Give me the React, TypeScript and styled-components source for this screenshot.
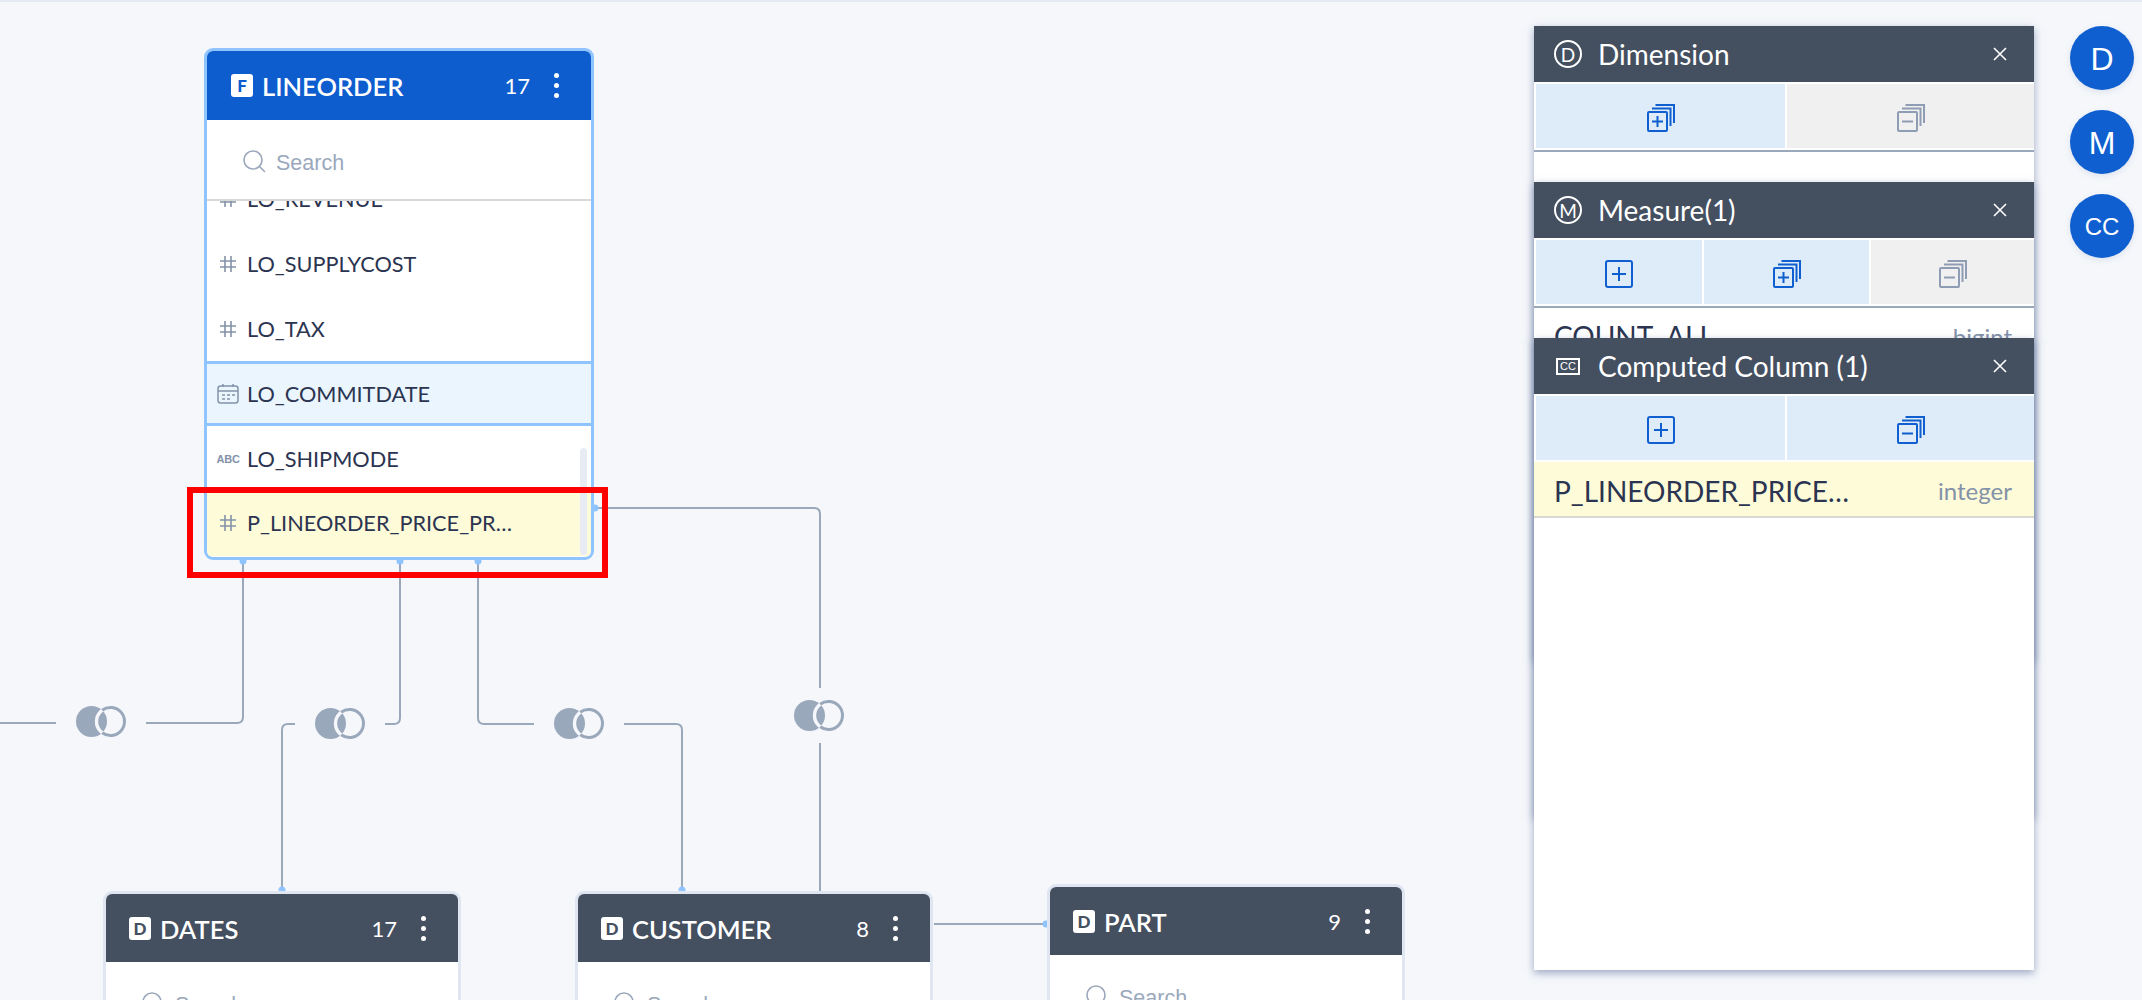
import React from "react";
import styled, { createGlobalStyle } from "styled-components";

const Global = createGlobalStyle`
  html, body { margin: 0; padding: 0; background: #f5f7fb; }
  * { box-sizing: border-box; }
`;

const Page = styled.div`
  position: relative;
  width: 2142px;
  height: 1000px;
  overflow: hidden;
  background: #f5f7fb;
  border-top: 2px solid #e4e9f4;
  font-family: Lato, "Liberation Sans", sans-serif;
`;

const Links = styled.svg`
  position: absolute;
  left: 0;
  top: -2px;
  width: 2142px;
  height: 1000px;
`;

const TableNode = styled.div<{ $x: number; $y: number; $w: number; $h: number; $active?: boolean }>`
  position: absolute;
  left: ${(p) => p.$x}px;
  top: ${(p) => p.$y - 2}px;
  width: ${(p) => p.$w}px;
  height: ${(p) => p.$h}px;
  border: 3px solid ${(p) => (p.$active ? "#90c4ff" : "#dfe6f2")};
  border-radius: 9px;
  background: #fff;
  display: flex;
  flex-direction: column;
  overflow: hidden;
`;

const TableHead = styled.div<{ $active?: boolean }>`
  flex: none;
  height: ${(p) => (p.$active ? 69 : 68)}px;
  display: flex;
  align-items: center;
  padding-left: ${(p) => (p.$active ? 24 : 23)}px;
  padding-right: 32px;
  color: #fff;
  background: ${(p) => (p.$active ? "#0e5dcf" : "#444f60")};
`;

const TypeBadge = styled.span<{ $active?: boolean }>`
  flex: none;
  width: 22px;
  height: 23px;
  margin-right: 9px;
  border-radius: 3px;
  background: #fff;
  color: ${(p) => (p.$active ? "#0e5dcf" : "#444f60")};
  font: 900 17px/23px Lato, "Liberation Sans", sans-serif;
  text-align: center;
`;

const TableName = styled.span`
  flex: 1;
  padding-top: 1px;
  font-size: 25.5px;
  font-weight: 600;
  line-height: 30px;
`;

const ColCount = styled.span`
  padding-top: 1px;
  font-size: 22px;
  line-height: 30px;
  margin-right: 24px;
`;

const Kebab = styled.span`
  flex: none;
  display: flex;
  flex-direction: column;
  gap: 5px;
  i {
    display: block;
    width: 5px;
    height: 5px;
    border-radius: 50%;
    background: #fff;
  }
`;

const SearchBar = styled.div`
  flex: none;
  height: 81px;
  display: flex;
  align-items: center;
  gap: 10px;
  padding-left: 36px;
  padding-top: 3px;
  border-bottom: 2px solid #d8d8d8;
  color: #9aa8bc;
  font: 21.5px/26px "Liberation Sans", sans-serif;
`;

const SearchHint = styled.span`
  padding-top: 3px;
`;

const ColList = styled.div`
  position: relative;
  flex: 1;
  overflow: hidden;
  min-height: 0;
`;

const ColRows = styled.div`
  margin-top: -35px;
`;

const ColRow = styled.div<{ $kind?: "date" | "cc" }>`
  height: 65px;
  display: flex;
  align-items: center;
  padding-left: 10px;
  gap: 8px;
  color: #2b3450;
  font-size: 21.7px;
  background: ${(p) => (p.$kind === "date" ? "#eaf5fd" : p.$kind === "cc" ? "#fdfbd8" : "#fff")};
  ${(p) => (p.$kind === "date" ? "border-top: 3px solid #90c4ff; border-bottom: 3px solid #90c4ff;" : "")}
  ${(p) => (p.$kind === "cc" ? "padding-bottom: 2px;" : "")}
`;

const ColIcon = styled.span`
  flex: none;
  width: 22px;
  height: 22px;
  display: flex;
  align-items: center;
  justify-content: center;
  color: #8492a9;
`;

const AbcMark = styled.span`
  font: 700 11px/22px "Liberation Sans", sans-serif;
  letter-spacing: -0.2px;
`;

const ScrollThumb = styled.div`
  position: absolute;
  right: 4px;
  bottom: 2px;
  width: 7px;
  height: 107px;
  border-radius: 4px;
  background: #e6ebf4;
`;

const Highlight = styled.div`
  position: absolute;
  left: 187px;
  top: 485px;
  width: 421px;
  height: 91px;
  border: 6px solid #ff0000;
`;

const Panel = styled.section<{ $y: number; $h: number }>`
  position: absolute;
  left: 1534px;
  top: ${(p) => p.$y - 2}px;
  width: 500px;
  height: ${(p) => p.$h}px;
  background: #fff;
  box-shadow: 0 3px 8px rgba(80, 100, 145, 0.55);
  overflow: hidden;
`;

const PanelHead = styled.header`
  height: 56px;
  display: flex;
  align-items: center;
  padding: 0 27px 0 20px;
  color: #fff;
  background: #444f60;
  font-size: 28px;
`;

const PanelMark = styled.span`
  flex: none;
  width: 28px;
  height: 28px;
  margin-right: 16px;
  border: 2px solid #fff;
  border-radius: 50%;
  display: flex;
  align-items: center;
  justify-content: center;
  font: 400 19px/1 Lato, sans-serif;
`;

const CcMark = styled.span`
  flex: none;
  width: 24px;
  height: 17px;
  margin: 0 18px 0 2px;
  border: 2px solid #fff;
  display: flex;
  align-items: center;
  justify-content: center;
  font: 400 11px/1 "Liberation Sans", sans-serif;
`;

const PanelTitle = styled.span`
  flex: 1;
`;

const Tools = styled.div<{ $cols: string }>`
  height: 68px;
  display: grid;
  grid-template-columns: ${(p) => p.$cols};
  gap: 2px;
  padding: 2px 0 2px 2px;
`;

const ToolButton = styled.div<{ $off?: boolean }>`
  display: flex;
  align-items: center;
  justify-content: center;
  padding-top: 4px;
  color: ${(p) => (p.$off ? "#8e9cb4" : "#0f5fd0")};
  background: ${(p) => (p.$off ? "#f0f0f0" : "#deecf9")};
`;

const Rule = styled.div`
  height: 2px;
  background: #9aa8bc;
`;

const PanelRow = styled.div<{ $hit?: boolean }>`
  height: 56px;
  display: flex;
  align-items: center;
  justify-content: space-between;
  padding: ${(p) => (p.$hit ? 3 : 0)}px 22px 0 20px;
  color: #2b3450;
  font-size: 28px;
  background: ${(p) => (p.$hit ? "#fdfbd8" : "#fff")};
  ${(p) => (p.$hit ? "border-bottom: 2px solid #d8d8d0;" : "")}
`;

const DataType = styled.span`
  color: #8492a9;
  font-size: 24px;
`;

const Dock = styled.nav`
  position: absolute;
  left: 2070px;
  top: 24px;
  display: flex;
  flex-direction: column;
  gap: 20px;
`;

const DockButton = styled.div<{ $small?: boolean }>`
  width: 64px;
  height: 64px;
  padding-top: 2px;
  border-radius: 50%;
  display: flex;
  align-items: center;
  justify-content: center;
  color: #fff;
  background: #0f5fd0;
  box-shadow: 0 2px 6px rgba(90, 110, 150, 0.15);
  font: ${(p) => (p.$small ? 24 : 32)}px/1 "Liberation Sans", sans-serif;
`;

const BG = "#f5f7fb";
const LINE = "#9aa8bc";

const Join = ({ x, y }: { x: number; y: number }) => (
  <g transform={`translate(${x} ${y})`}>
    <circle cx="15.5" cy="15.5" r="15.5" fill={LINE} />
    <circle cx="34.5" cy="15.5" r="14" fill="none" stroke={BG} strokeWidth="3.4" />
    <path d="M26.16 4.25A14 14 0 1 1 26.16 26.75" fill="none" stroke={LINE} strokeWidth="3" />
  </g>
);

const Hash = () => (
  <svg width="16" height="16" viewBox="0 0 16 16" fill="none" stroke="currentColor" strokeWidth="1.6">
    <path d="M5 0V16M11 0V16M0 5H16M0 11H16" />
  </svg>
);

const Calendar = () => (
  <svg width="22" height="20" viewBox="0 0 22 20" fill="none" stroke="currentColor" strokeWidth="1.5">
    <rect x="1" y="2" width="20" height="17" rx="2.5" />
    <path d="M1 7H21M6 0V3M16 0V3" />
    <path d="M5 11H8M10 11H13M15 11H18M5 15H8M10 15H13" strokeWidth="1.6" />
  </svg>
);

const Magnifier = () => (
  <svg width="23" height="23" viewBox="0 0 23 23" fill="none" stroke="currentColor" strokeWidth="1.6">
    <circle cx="10" cy="10" r="9" />
    <path d="M16.5 16.5L22 22" />
  </svg>
);

const Close = () => (
  <svg width="14" height="14" viewBox="0 0 14 14" stroke="#fff" strokeWidth="1.6" fill="none">
    <path d="M1 1L13 13M13 1L1 13" />
  </svg>
);

const AddOne = () => (
  <svg width="28" height="28" viewBox="0 0 28 28" fill="none" stroke="currentColor" strokeWidth="2">
    <rect x="1" y="1" width="26" height="26" rx="2" />
    <path d="M14 7V21M7 14H21" />
  </svg>
);

const Stack = ({ plus }: { plus?: boolean }) => (
  <svg width="28" height="28" viewBox="0 0 28 28" fill="none" stroke="currentColor" strokeWidth="2">
    <rect x="1" y="8" width="19" height="19" rx="1" />
    <path d="M5 4.5H23.5V22M8.5 1H27V19" />
    <path d={plus ? "M10.5 12V23M5 17.5H16" : "M5 17.5H16"} />
  </svg>
);

type Col = { icon: "hash" | "date" | "abc"; name: string; kind?: "date" | "cc" };

const lineorderCols: Col[] = [
  { icon: "hash", name: "LO_REVENUE" },
  { icon: "hash", name: "LO_SUPPLYCOST" },
  { icon: "hash", name: "LO_TAX" },
  { icon: "date", name: "LO_COMMITDATE", kind: "date" },
  { icon: "abc", name: "LO_SHIPMODE" },
  { icon: "hash", name: "P_LINEORDER_PRICE_PR…", kind: "cc" },
];

const Table = ({
  x, y, w, h, badge, name, count, active, cols,
}: {
  x: number; y: number; w: number; h: number; badge: string; name: string; count: number; active?: boolean; cols?: Col[];
}) => (
  <TableNode $x={x} $y={y} $w={w} $h={h} $active={active}>
    <TableHead $active={active}>
      <TypeBadge $active={active}>{badge}</TypeBadge>
      <TableName>{name}</TableName>
      <ColCount>{count}</ColCount>
      <Kebab><i /><i /><i /></Kebab>
    </TableHead>
    <SearchBar><Magnifier /><SearchHint>Search</SearchHint></SearchBar>
    {cols && (
      <ColList>
        <ColRows>
          {cols.map((c) => (
            <ColRow key={c.name} $kind={c.kind}>
              <ColIcon>
                {c.icon === "hash" && <Hash />}
                {c.icon === "date" && <Calendar />}
                {c.icon === "abc" && <AbcMark>ABC</AbcMark>}
              </ColIcon>
              {c.name}
            </ColRow>
          ))}
        </ColRows>
        <ScrollThumb />
      </ColList>
    )}
  </TableNode>
);

export default function App() {
  return (
    <Page>
      <Global />
      <Links viewBox="0 0 2142 1000">
        <g fill="none" stroke={LINE} strokeWidth="2">
          <path d="M0 723H56M146 723H237Q243 723 243 717V558" />
          <path d="M400 558V718Q400 724 394 724H385" />
          <path d="M295 724H288Q282 724 282 730V890" />
          <path d="M478 558V718Q478 724 484 724H534" />
          <path d="M624 724H676Q682 724 682 730V890" />
          <path d="M595 508H814Q820 508 820 514V688" />
          <path d="M820 743V892" />
          <path d="M934 924H1045" />
        </g>
        <g fill="#90c4ff">
          <circle cx="243" cy="561" r="3.5" />
          <circle cx="400" cy="561" r="3.5" />
          <circle cx="478" cy="561" r="3.5" />
          <circle cx="595" cy="508" r="3.5" />
          <circle cx="282" cy="890" r="3.5" />
          <circle cx="682" cy="890" r="3.5" />
          <circle cx="1046" cy="924" r="3.5" />
        </g>
        <Join x={76} y={706} />
        <Join x={315} y={708} />
        <Join x={554} y={708} />
        <Join x={794} y={700} />
      </Links>

      <Table x={204} y={48} w={390} h={512} badge="F" name="LINEORDER" count={17} active cols={lineorderCols} />
      <Table x={103} y={891} w={358} h={200} badge="D" name="DATES" count={17} />
      <Table x={575} y={891} w={358} h={200} badge="D" name="CUSTOMER" count={8} />
      <Table x={1047} y={884} w={358} h={200} badge="D" name="PART" count={9} />
      <Highlight />

      <Panel $y={26} $h={634}>
        <PanelHead>
          <PanelMark>D</PanelMark>
          <PanelTitle>Dimension</PanelTitle>
          <Close />
        </PanelHead>
        <Tools $cols="249px 247px">
          <ToolButton><Stack plus /></ToolButton>
          <ToolButton $off><Stack /></ToolButton>
        </Tools>
        <Rule />
      </Panel>

      <Panel $y={182} $h={634}>
        <PanelHead>
          <PanelMark>M</PanelMark>
          <PanelTitle>Measure(1)</PanelTitle>
          <Close />
        </PanelHead>
        <Tools $cols="166px 165px 163px">
          <ToolButton><AddOne /></ToolButton>
          <ToolButton><Stack plus /></ToolButton>
          <ToolButton $off><Stack /></ToolButton>
        </Tools>
        <Rule />
        <PanelRow>
          <span>COUNT_ALL</span>
          <DataType>bigint</DataType>
        </PanelRow>
      </Panel>

      <Panel $y={338} $h={632}>
        <PanelHead>
          <CcMark>CC</CcMark>
          <PanelTitle>Computed Column (1)</PanelTitle>
          <Close />
        </PanelHead>
        <Tools $cols="249px 247px">
          <ToolButton><AddOne /></ToolButton>
          <ToolButton><Stack /></ToolButton>
        </Tools>
        <PanelRow $hit>
          <span>P_LINEORDER_PRICE…</span>
          <DataType>integer</DataType>
        </PanelRow>
      </Panel>

      <Dock>
        <DockButton>D</DockButton>
        <DockButton>M</DockButton>
        <DockButton $small>CC</DockButton>
      </Dock>
    </Page>
  );
}
